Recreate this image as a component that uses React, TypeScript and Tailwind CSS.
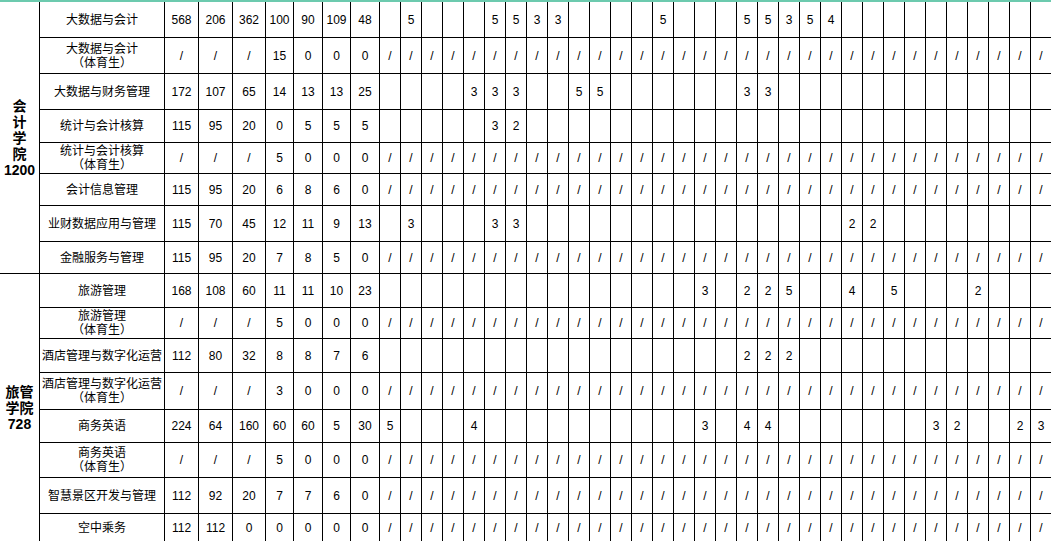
import { Fragment, type ReactNode } from 'react'

const SLASH = '/'

type Row = {
  name: string[]
  nums: string[]
  // index -> value for the 32 narrow columns; 'all' means every cell is a slash
  marks: Record<number, string> | 'all'
}

const ROWS: Row[] = [
  { name: ['大数据与会计'], nums: ['568', '206', '362', '100', '90', '109', '48'], marks: { 1: '5', 5: '5', 6: '5', 7: '3', 8: '3', 13: '5', 17: '5', 18: '5', 19: '3', 20: '5', 21: '4' } },
  { name: ['大数据与会计', '（体育生）'], nums: ['/', '/', '/', '15', '0', '0', '0'], marks: 'all' },
  { name: ['大数据与财务管理'], nums: ['172', '107', '65', '14', '13', '13', '25'], marks: { 4: '3', 5: '3', 6: '3', 9: '5', 10: '5', 17: '3', 18: '3' } },
  { name: ['统计与会计核算'], nums: ['115', '95', '20', '0', '5', '5', '5'], marks: { 5: '3', 6: '2' } },
  { name: ['统计与会计核算', '（体育生）'], nums: ['/', '/', '/', '5', '0', '0', '0'], marks: 'all' },
  { name: ['会计信息管理'], nums: ['115', '95', '20', '6', '8', '6', '0'], marks: 'all' },
  { name: ['业财数据应用与管理'], nums: ['115', '70', '45', '12', '11', '9', '13'], marks: { 1: '3', 5: '3', 6: '3', 22: '2', 23: '2' } },
  { name: ['金融服务与管理'], nums: ['115', '95', '20', '7', '8', '5', '0'], marks: 'all' },
  { name: ['旅游管理'], nums: ['168', '108', '60', '11', '11', '10', '23'], marks: { 15: '3', 17: '2', 18: '2', 19: '5', 22: '4', 24: '5', 28: '2' } },
  { name: ['旅游管理', '（体育生）'], nums: ['/', '/', '/', '5', '0', '0', '0'], marks: 'all' },
  { name: ['酒店管理与数字化运营'], nums: ['112', '80', '32', '8', '8', '7', '6'], marks: { 17: '2', 18: '2', 19: '2' } },
  { name: ['酒店管理与数字化运营', '（体育生）'], nums: ['/', '/', '/', '3', '0', '0', '0'], marks: 'all' },
  { name: ['商务英语'], nums: ['224', '64', '160', '60', '60', '5', '30'], marks: { 0: '5', 4: '4', 15: '3', 17: '4', 18: '4', 26: '3', 27: '2', 30: '2', 31: '3' } },
  { name: ['商务英语', '（体育生）'], nums: ['/', '/', '/', '5', '0', '0', '0'], marks: 'all' },
  { name: ['智慧景区开发与管理'], nums: ['112', '92', '20', '7', '7', '6', '0'], marks: 'all' },
  { name: ['空中乘务'], nums: ['112', '112', '0', '0', '0', '0', '0'], marks: 'all' },
]

// college label sits in the first column, spanning its 8 rows
const COLLEGES: Record<number, string[]> = {
  0: ['会', '计', '学', '院', '1200'],
  8: ['旅管', '学院', '728'],
}

const NARROW = Array.from({ length: 32 }, (_, i) => i)

function Cell({ children }: { children?: ReactNode }) {
  return <div className="bg-white flex items-center justify-center text-[12px] leading-[14px] text-black">{children}</div>
}

export default function App() {
  return (
    <div className="w-[1051px] h-[541px] overflow-hidden bg-white font-['Liberation_Sans','Noto_Sans_CJK_SC',sans-serif]">
      <div className="border-t-2 border-[#6ccaae]">
        <div className="grid gap-px bg-black grid-cols-[39px_124px_33px_33px_32px_27px_28px_27px_28px_repeat(32,20px)] grid-rows-[35px_35px_35px_32px_30px_31px_35px_31px_33px_30px_33px_36px_32px_34px_35px_28px]">
          {ROWS.map((row, r) => (
            <Fragment key={r}>
              {COLLEGES[r] && (
                <div className="row-span-8 bg-white flex flex-col items-center justify-center text-[14px] leading-[16px] font-bold text-black">
                  {COLLEGES[r].map((line) => (
                    <span key={line}>{line}</span>
                  ))}
                </div>
              )}
              <div className="bg-white flex flex-col items-center justify-center text-[12px] leading-[14px] text-black whitespace-nowrap">
                {row.name.map((line) => (
                  <span key={line}>{line}</span>
                ))}
              </div>
              {row.nums.map((n, i) => (
                <Cell key={`n${i}`}>{n}</Cell>
              ))}
              {NARROW.map((i) => (
                <Cell key={`m${i}`}>{row.marks === 'all' ? SLASH : row.marks[i] ?? ''}</Cell>
              ))}
            </Fragment>
          ))}
        </div>
      </div>
    </div>
  )
}
